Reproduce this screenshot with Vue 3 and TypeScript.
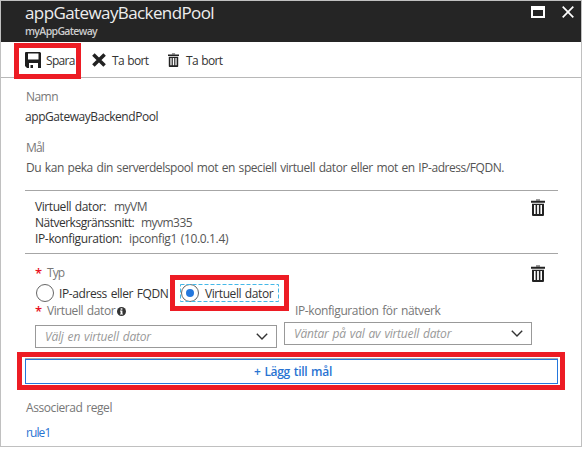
<script setup lang="ts">
import { ref } from 'vue'

type TargetType = 'ip' | 'vm'

const targetType = ref<TargetType>('vm')

const target = [
  { label: 'Virtuell dator:', value: 'myVM', cls: 'vm' },
  { label: 'Nätverksgränssnitt:', value: 'myvm335', cls: 'nic' },
  { label: 'IP-konfiguration:', value: 'ipconfig1 (10.0.1.4)', cls: 'ip' },
]
</script>

<template>
  <main class="panel">
    <header class="header">
      <div>
        <h1>appGatewayBackendPool</h1>
        <p class="subtitle">myAppGateway</p>
      </div>
      <div class="window-buttons">
        <svg width="14" height="12" viewBox="0 0 14 12"><path fill="#fff" fill-rule="evenodd" d="M0 0h14v12H0zM2 4v6h10V4z" /></svg>
        <svg width="12" height="12" viewBox="0 0 12 12"><path d="M.7.7l10.6 10.6M11.3.7L.7 11.3" stroke="#fff" stroke-width="1.7" /></svg>
      </div>
    </header>

    <nav class="toolbar">
      <div class="tool save">
        <svg width="16" height="16" viewBox="0 0 16 16">
          <path fill="#1e1e1e" fill-rule="evenodd" d="M0 1Q0 0 1 0H15L16 1V16H13V11H4V16H2L0 14zM3 1.5V7.500H13.500V1.500z" />
          <path fill="#1e1e1e" d="M5.500 13h2.500v3h-2.500z" />
        </svg>
        <span>Spara</span>
        <i class="mark mark-save"></i>
      </div>
      <div class="tool discard">
        <svg width="14" height="14" viewBox="0 0 14 14"><path d="M1.400 1.400l11.200 11.200M12.600 1.400L1.400 12.600" stroke="#222" stroke-width="3.500" /></svg>
        <span>Ta bort</span>
      </div>
      <div class="tool">
        <svg width="11" height="14" viewBox="0 0 14 17" preserveAspectRatio="none"><use href="#bin" /></svg>
        <span>Ta bort</span>
      </div>
    </nav>

    <section class="content">
      <p class="muted namn">Namn</p>
      <p class="name">appGatewayBackendPool</p>
      <p class="muted goal">Mål</p>
      <p class="description">Du kan peka din serverdelspool mot en speciell virtuell dator eller mot en IP-adress/FQDN.</p>

      <div class="target">
        <div>
          <p v-for="row in target" :key="row.label" :class="['target-row', row.cls]">
            <span class="key">{{ row.label }}</span><span class="value">{{ row.value }}</span>
          </p>
        </div>
        <svg class="bin" width="14" height="17" viewBox="0 0 14 17">
          <g id="bin">
            <path fill="#999" d="M5 0h4v2H5z" />
            <path fill="#222" fill-rule="evenodd" d="M0 1.700h14v2H0zM1 4.700h12V16q0 1-1 1H2q-1 0-1-1zM3 6v9h1.600V6zM6.100 6v9h1.800V6zM9.400 6v9H11V6z" />
          </g>
        </svg>
      </div>

      <div class="type-row">
        <p class="muted required"><b>*</b><span class="typ">Typ</span></p>
        <svg class="bin" width="14" height="17" viewBox="0 0 14 17"><use href="#bin" /></svg>
      </div>

      <div class="radios">
        <div class="radio first" @click="targetType = 'ip'">
          <span :class="['circle', { checked: targetType === 'ip' }]"></span>
          <span class="radio-text">IP-adress eller FQDN</span>
        </div>
        <div class="radio second" @click="targetType = 'vm'">
          <svg class="focus" width="99" height="18"><rect x=".5" y=".5" width="98" height="17" fill="none" stroke="#45b8e8" stroke-dasharray="4 2" /></svg>
          <span :class="['circle', { checked: targetType === 'vm' }]"></span>
          <span class="radio-text">Virtuell dator</span>
          <i class="mark mark-radio"></i>
        </div>
      </div>

      <div class="fields">
        <div>
          <div class="muted required">
            <b>*</b><span class="vm-label">Virtuell dator</span>
            <svg width="9" height="9" viewBox="0 0 9 9"><circle cx="4.500" cy="4.500" r="4.500" fill="#333" /><path d="M3.600 1.200h1.800v1.500H3.600zM3 3.500h2.400v3.200H6v.9H3v-.9h.6V4.400H3z" fill="#fff" /></svg>
          </div>
          <div class="select vm-select">
            <span>Välj en virtuell dator</span>
            <svg width="12" height="7" viewBox="0 0 12 7"><path d="M.8.8L6 6 11.200.8" fill="none" stroke="#333" stroke-width="1.400" /></svg>
          </div>
        </div>
        <div>
          <p class="muted network-label">IP-konfiguration för nätverk</p>
          <div class="select network-select">
            <span>Väntar på val av virtuell dator</span>
            <svg width="12" height="7" viewBox="0 0 12 7"><path d="M.8.8L6 6 11.200.8" fill="none" stroke="#333" stroke-width="1.400" /></svg>
          </div>
        </div>
      </div>

      <div class="add-wrap">
        <button class="add" type="button">+ Lägg till mål</button>
        <i class="mark mark-add"></i>
      </div>

      <p class="muted rule-label">Associerad regel</p>
      <a class="rule">rule1</a>
    </section>
  </main>
</template>

<style>
body {
  background: #fff;
}
</style>

<style scoped>
* {
  box-sizing: border-box;
}
.panel {
  width: 582px;
  height: 447px;
  border: 1px solid #c0c0c0;
  color: #333;
  font: 12px/16px "Open Sans", "Noto Sans", sans-serif;
  letter-spacing: -0.42px;
  word-spacing: 1px;
  white-space: nowrap;
}
p,
h1 {
  margin: 0;
}
svg {
  display: block;
  flex: none;
}
.header {
  display: flex;
  justify-content: space-between;
  height: 41px;
  padding: 0 7px 0 24px;
  background: #252525;
  color: #eee;
}
h1 {
  padding-top: 1px;
  font-size: 17px;
  font-weight: 400;
  line-height: 22px;
  letter-spacing: -0.6px;
}
.subtitle {
  color: #ccc;
  font-size: 10.5px;
  font-weight: 600;
  line-height: 14px;
  letter-spacing: -0.65px;
}
.window-buttons {
  display: flex;
  gap: 17px;
  padding-top: 5px;
}
.toolbar {
  display: flex;
  align-items: center;
  height: 36px;
  padding-left: 24px;
  border-bottom: 1px solid #b8b8b8;
}
.tool {
  position: relative;
  display: flex;
  align-items: center;
  letter-spacing: -0.7px;
}
.tool span {
  padding-top: 2px;
}
.save {
  gap: 5px;
  width: 67px;
}
.discard {
  gap: 6px;
  width: 76px;
}
.discard + .tool {
  gap: 7px;
}
.mark {
  position: absolute;
  border: 5px solid #ed1c24;
  pointer-events: none;
}
.mark-save {
  left: -11px;
  top: -8px;
  width: 67px;
  height: 36px;
}
.content {
  padding: 11px 23px 0 24px;
}
.muted {
  color: #777;
}
.namn {
  padding-left: 1px;
  letter-spacing: -0.54px;
}
.name {
  margin-top: 4px;
  letter-spacing: -0.44px;
}
.goal {
  margin-top: 15px;
  padding-left: 1px;
  letter-spacing: -0.8px;
}
.description {
  margin: 4px 0 14px;
  padding-left: 1px;
  color: #555;
  letter-spacing: -0.44px;
}
.target {
  display: flex;
  justify-content: space-between;
  height: 64px;
  padding: 8px 13px 0 10px;
  border: solid #a6a6a6;
  border-width: 1px 0;
}
.target .bin {
  margin-top: 0;
}
.target-row {
  display: flex;
}
.target-row .value {
  color: #555;
}
.vm .key {
  width: 79px;
}
.vm .value {
  letter-spacing: -0.5px;
}
.nic .key {
  width: 106px;
  letter-spacing: -0.5px;
}
.nic .value {
  letter-spacing: -0.54px;
}
.ip .key {
  width: 94px;
  letter-spacing: -0.35px;
}
.ip .value {
  letter-spacing: -0.35px;
}
.type-row {
  display: flex;
  justify-content: space-between;
  height: 30px;
  padding: 11px 13px 0 10px;
}
.required {
  display: flex;
  align-items: center;
  height: 16px;
}
.required b {
  width: 12px;
  color: #e81123;
  font-size: 13px;
  font-weight: 600;
  line-height: 16px;
}
.typ {
  letter-spacing: -0.95px;
}
.radios {
  display: flex;
  height: 18px;
  padding-left: 11px;
}
.radio {
  position: relative;
  display: flex;
  align-items: center;
}
.radio-text {
  padding-top: 2px;
}
.first {
  width: 144px;
  gap: 5px;
  letter-spacing: -0.4px;
}
.second {
  width: 99px;
  padding-left: 1px;
  gap: 6px;
}
.circle {
  display: flex;
  align-items: center;
  justify-content: center;
  width: 18px;
  height: 18px;
  border: 1px solid #666;
  border-radius: 50%;
}
.checked::after {
  width: 8px;
  height: 8px;
  border-radius: 50%;
  background: #2477dd;
  content: "";
}
.focus {
  position: absolute;
  left: 0;
  top: 0;
}
.mark-radio {
  left: -10px;
  top: -9px;
  width: 119px;
  height: 36px;
}
.fields {
  display: grid;
  grid-template-columns: 242px 248px;
  column-gap: 7px;
  height: 46px;
  padding: 1px 0 0 10px;
}
.vm-label {
  width: 70px;
}
.network-label {
  padding-left: 11px;
  letter-spacing: -0.39px;
}
.select {
  display: flex;
  align-items: center;
  justify-content: space-between;
  height: 23px;
  padding: 0 8px 0 9px;
  border: 1px solid #999;
  color: #999;
  font-style: italic;
  letter-spacing: -0.19px;
}
.select span {
  padding-top: 1px;
}
.vm-select {
  margin-top: 6px;
}
.network-select {
  margin-top: 3px;
}
.add-wrap {
  position: relative;
  height: 26px;
  margin-top: 10px;
  border-top: 1px solid #aaa;
}
.add {
  display: block;
  width: 100%;
  height: 25px;
  padding: 1px 0 0 3px;
  border: 1px solid #2477dd;
  background: #fff;
  color: #2873d2;
  font: 600 12px/16px "Open Sans", "Noto Sans", sans-serif;
  letter-spacing: -0.31px;
  word-spacing: 1px;
}
.mark-add {
  left: -8px;
  top: -7px;
  width: 548px;
  height: 38px;
}
.rule-label {
  margin-top: 16px;
  padding-left: 1px;
}
.rule {
  display: block;
  margin-top: 9px;
  padding-left: 1px;
  color: #2873d2;
  letter-spacing: -0.9px;
}
</style>
